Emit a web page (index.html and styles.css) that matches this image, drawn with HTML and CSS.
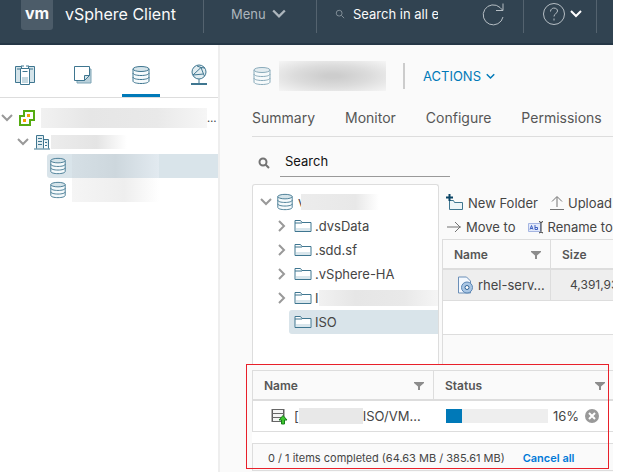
FILE: index.html
```html
<!DOCTYPE html>
<html lang="en">
<head>
  <meta charset="UTF-8" />
  <meta name="viewport" content="width=device-width, initial-scale=1.0"/>
  <title>vSphere Client</title>
  <link rel="stylesheet" href="styles.css">
</head>
<body>
  <!-- shared icons -->
  <svg class="defs" width="0" height="0" aria-hidden="true">
    <symbol id="db" viewBox="0 0 20 20">
      <path d="M2 4v12c0 1.500 3.500 2.500 8 2.500s8-1 8-2.500V4" fill="#f5fafc"/>
      <ellipse cx="10" cy="4" rx="8" ry="2.500" fill="#d5e4ea"/>
      <path d="M2 8c0 1.500 3.500 2.500 8 2.500S18 9.500 18 8M2 12c0 1.500 3.500 2.500 8 2.500s8-1 8-2.500" fill="none"/>
    </symbol>
    <symbol id="down" viewBox="0 0 12 12"><path d="M1 3l5 5 5-5"/></symbol>
    <symbol id="right" viewBox="0 0 12 12"><path d="M3 1l5 5-5 5"/></symbol>
    <symbol id="folder" viewBox="0 0 18 14">
      <path d="M1 12.500V1.500h5.500l1.500 2h9v9z" fill="#fff"/><path d="M2 9h14v3H2z" fill="#d9e6ec" stroke="none"/><path d="M1 4h7"/>
    </symbol>
    <symbol id="filter" viewBox="0 0 10 10"><path d="M0 1h10v1L6 5.500V9H4V5.500L0 2z"/></symbol>
    <symbol id="search" viewBox="0 0 12 12"><circle cx="5" cy="5" r="3.500"/><path d="M7.700 7.700L11 11"/></symbol>
  </svg>

  <header class="header">
    <div class="logo">vm</div>
    <div class="title">vSphere Client</div>
    <button class="menu">Menu <svg class="line" width="14" height="14"><use href="#down"/></svg></button>
    <div class="global-search">
      <svg class="line" width="10" height="10"><use href="#search"/></svg>
      <input type="text" value="Search in all environments" aria-label="Search in all environments">
    </div>
    <button class="refresh" aria-label="Refresh">
      <svg class="line" width="24" height="24" viewBox="0 0 24 24"><path d="M22 15A10 10 0 1 1 19 5.500L21.500 8M22 1.500V8.500H15"/></svg>
    </button>
    <button class="help" aria-label="Help">
      <svg class="line" width="24" height="24" viewBox="0 0 24 24"><circle cx="12" cy="12" r="10.500"/><path d="M8.500 9.500c0-4.500 7-4.500 7-.500 0 2.500-3.500 2.500-3.500 5.500M12 16.500v2"/></svg>
      <svg class="line caret" width="12" height="12"><use href="#down"/></svg>
    </button>
  </header>

  <div class="page">
    <aside class="sidebar">
      <nav class="views">
        <a href="#" aria-label="Hosts"><svg width="22" height="22" viewBox="0 0 22 22">
          <path d="M1.500 2.500h6v16h-6zM14.500 2.500h6v16h-6z" fill="#d5e4ea"/><path d="M3 5h3M16 5h3"/><path d="M6.500 4.500h9v16h-9z" fill="#fff"/><path d="M8.500 7.500h5M7 2h3M12 2h3"/><path d="M8 13h6v6H8z" fill="#c5d8e0" stroke="none"/></svg></a>
        <a href="#" aria-label="VMs"><svg width="20" height="20" viewBox="0 0 20 20">
          <path d="M4 4h14v14H4z" fill="#b9d0da" stroke="#7ea5b6"/><path d="M1.500 1.500h15v9l-5 5h-10z" fill="#fff"/><path d="M16.500 10.500h-5v5z" fill="#d5e4ea"/></svg></a>
        <a href="#" class="active" aria-label="Storage"><svg width="20" height="20"><use href="#db"/></svg></a>
        <a href="#" aria-label="Networks"><svg width="20" height="22" viewBox="0 0 20 22">
          <circle cx="10" cy="8" r="7" fill="#e2edf1"/><path d="M4 11L12 3.500 14.500 10 4 11M12 3.500l4 .5M14.500 10l1 2M8 2l4 1.500M10 15v4" fill="none"/><path d="M2 20h16" stroke-width="2"/></svg></a>
      </nav>
      <ul class="tree inventory">
        <li><svg class="arrow" width="12" height="12"><use href="#down"/></svg>
          <svg width="18" height="18" viewBox="0 0 18 18"><path d="M6 2h10v9h-4v5H2V7h4z" fill="#fff" stroke="#55ac12" stroke-width="2"/><path d="M9 5h3v3H9zM5 10h3v3H5z" fill="#f5a000" stroke="none"/></svg>
          <span class="blur wide"></span><span class="more">…</span></li>
        <li class="l1"><svg class="arrow" width="12" height="12"><use href="#down"/></svg>
          <svg width="16" height="16" viewBox="0 0 16 16"><path d="M2.500 14.500V1.500h7v13M9.500 5.500h5v9" fill="#e2edf1"/><path d="M0 15h16M4 4.500h4M4 7.500h4M4 10.500h4M11 8.500h2M11 11.500h2"/></svg>
          <span class="blur short"></span></li>
        <li class="l2 selected"><svg width="18" height="18"><use href="#db"/></svg><span class="blur store cool"></span></li>
        <li class="l2"><svg width="18" height="18"><use href="#db"/></svg><span class="blur store"></span></li>
      </ul>
    </aside>

    <main class="content">
      <div class="object">
        <svg class="faded" width="20" height="20"><use href="#db"/></svg>
        <span class="blur name"></span>
        <button class="actions">ACTIONS <svg class="line" width="9" height="9"><use href="#down"/></svg></button>
      </div>
      <nav class="tabs">
        <a href="#">Summary</a>
        <a href="#">Monitor</a>
        <a href="#">Configure</a>
        <a href="#">Permissions</a>
      </nav>
      <div class="file-search">
        <svg class="line" width="12" height="12"><use href="#search"/></svg>
        <input type="text" value="Search" aria-label="Search">
      </div>

      <div class="browser">
        <ul class="tree folders">
          <li><svg class="arrow" width="12" height="12"><use href="#down"/></svg><svg width="18" height="18"><use href="#db"/></svg><span>v</span><span class="blur root"></span></li>
          <li class="l1"><svg class="arrow" width="12" height="12"><use href="#right"/></svg><svg width="18" height="14"><use href="#folder"/></svg>.dvsData</li>
          <li class="l1"><svg class="arrow" width="12" height="12"><use href="#right"/></svg><svg width="18" height="14"><use href="#folder"/></svg>.sdd.sf</li>
          <li class="l1"><svg class="arrow" width="12" height="12"><use href="#right"/></svg><svg width="18" height="14"><use href="#folder"/></svg>.vSphere-HA</li>
          <li class="l1"><svg class="arrow" width="12" height="12"><use href="#right"/></svg><svg width="18" height="14"><use href="#folder"/></svg>I<span class="blur long"></span></li>
          <li class="l2 selected"><svg width="18" height="14"><use href="#folder"/></svg>ISO</li>
        </ul>

        <section class="files">
          <div class="toolbar">
            <button><svg width="18" height="18" viewBox="0 0 18 18"><path d="M3.500 15.500V6.500h4l1 2h8v7z" fill="#edf5f8"/><path d="M3.500 0v7M0 3.500h7" stroke="#0b4566" stroke-width="2"/></svg>New Folder</button>
            <button><svg class="line" width="14" height="16" viewBox="0 0 14 16"><path d="M7 12V2M2 6.500l5-5 5 5M0 14.500h14"/></svg>Upload</button>
          </div>
          <div class="toolbar">
            <button><svg class="line" width="16" height="14" viewBox="0 0 16 14"><path d="M1 7h14M9 2l5 5-5 5"/></svg>Move to</button>
            <button><svg width="16" height="14" viewBox="1 0 16 14"><path d="M1.500 3.500h12v8h-12z" fill="#e3eafa" stroke="#a5b5e2"/><path d="M3 9.500l1.500-4 1.500 4M3.500 8.500h2M8 5v4.500h2.500v-2H8" fill="none" stroke="#3d5fc0"/><path d="M12 1.500l2 1 2-1M14 2.500v9M12 13l2-1 2 1" fill="none" stroke="#333"/></svg>Rename to</button>
          </div>
          <table class="grid">
            <thead><tr><th class="col-name"><div>Name <svg class="fill" width="10" height="10"><use href="#filter"/></svg></div></th><th>Size</th></tr></thead>
            <tbody>
              <tr><td><div class="file"><svg width="17" height="18" viewBox="0 0 17 18"><path d="M1.500 1h8l4 4v12h-12z" fill="#f3f8fe" stroke="#6b8fb8"/><circle cx="10" cy="11.500" r="5.500" fill="#a9c6e4" stroke="#5b86b4"/><circle cx="10" cy="11.500" r="2" fill="#fff" stroke="#2f6297"/></svg>rhel-serv…</div></td><td class="size">4,391,936</td></tr>
            </tbody>
          </table>
          <div class="grid-foot"></div>
        </section>
      </div>

      <section class="uploads">
        <table class="grid">
          <thead><tr><th class="col-name"><div>Name <svg class="fill" width="10" height="10"><use href="#filter"/></svg></div></th><th><div>Status <svg class="fill" width="10" height="10"><use href="#filter"/></svg></div></th></tr></thead>
          <tbody>
            <tr>
              <td><div class="file"><svg width="18" height="18" viewBox="0 0 18 18"><path d="M2.500 2.500h11v12h-11z" fill="#f4f4f4" stroke="#555"/><path d="M2 2.500h12M2 6.500h12M2 10.500h12M2 14.500h12M2 2v13M14 2v13" stroke="#666"/><path d="M11.500 17v-4H9l4-4.500 4 4.500h-2.500v4z" fill="#3fc42f" stroke="#16801a"/></svg><span>[</span><span class="blur path"></span><span>ISO/VM…</span></div></td>
              <td><div class="status">
                <div class="bar" role="progressbar" aria-label="Upload progress" aria-valuenow="16"><div style="width: 16%"></div></div>
                <span>16%</span>
                <button class="cancel" aria-label="Cancel upload"><svg width="14" height="14" viewBox="0 0 14 14"><circle cx="7" cy="7" r="7" fill="#999" stroke="none"/><path d="M4 4l6 6M10 4l-6 6" stroke="#fff" stroke-width="2"/></svg></button>
              </div></td>
            </tr>
          </tbody>
        </table>
        <div class="summary"><span>0 / 1 items completed (64.63 MB / 385.61 MB)</span><a href="#">Cancel all</a></div>
      </section>
    </main>
  </div>
</body>
</html>
```
FILE: styles.css
```css
* {
  box-sizing: border-box;
}
body {
  margin: 0;
  padding-right: 5px;
  min-height: 100vh;
  display: flex;
  flex-direction: column;
  overflow: hidden;
  font-family: Inter, "Open Sans", sans-serif;
  font-size: 13px;
  line-height: 24px;
  color: #454545;
  background: #fff;
}
.defs { position: absolute; }
svg {
  flex: none;
  display: block;
  stroke: #3f7690;
  stroke-width: 1;
}
.line { fill: none; stroke: currentColor; }
.fill { fill: #8c8c8c; stroke: none; }
.arrow { fill: none; stroke: #999; stroke-width: 2; }
button, input {
  font: inherit;
  color: inherit;
  background: none;
  border: none;
  padding: 0;
  margin: 0;
}
button {
  display: flex;
  align-items: center;
  white-space: nowrap;
}
a { color: inherit; text-decoration: none; }
ul { list-style: none; margin: 0; padding: 0; }

/* header */
.header {
  display: flex;
  height: 45px;
  padding: 0 16px 10px 21px;
  background: #314351;
  border-bottom: 2px solid #253746;
  color: #fafafa;
}
.logo {
  width: 32px;
  height: 30px;
  line-height: 26px;
  border-radius: 0 0 3px 3px;
  background: #4c5c69;
  text-align: center;
  font-size: 16px;
  font-weight: 700;
}
.title {
  width: 151px;
  padding-left: 12px;
  line-height: 28px;
  font-size: 16px;
  white-space: nowrap;
  border-right: 1px solid #54636f;
}
.menu {
  width: 113px;
  padding: 0 0 5px 27px;
  gap: 6px;
  color: #adb6bd;
  border-right: 1px solid #54636f;
}
.global-search {
  display: flex;
  align-items: center;
  flex: 1;
  min-width: 0;
  gap: 8px;
  padding: 0 0 5px 18px;
}
.global-search svg { color: #8f9ba4; }
.global-search input { width: 85px; }
.refresh {
  padding: 0 18px 5px 0;
  color: #b6bec4;
  border-right: 1px solid #54636f;
}
.help {
  padding: 0 14px 5px 18px;
  gap: 4px;
  color: #b6bec4;
  border-right: 1px solid #54636f;
}
.caret { color: #fff; }
.menu svg, .caret { stroke-width: 2; }

.page {
  display: flex;
  flex: 1;
}

/* left navigator */
.sidebar {
  width: 220px;
  flex: none;
  border-right: 2px solid #eee;
}
.views {
  display: flex;
  height: 53px;
  justify-content: space-between;
  padding-left: 6px;
  border-bottom: 1px solid #ddd;
}
.views a {
  width: 38px;
  display: flex;
  align-items: center;
  justify-content: center;
  padding-top: 11px;
  border-bottom: 3px solid transparent;
}
.views .active { border-color: #0079b8; }
.tree li {
  display: flex;
  align-items: center;
  height: 24px;
  white-space: nowrap;
  overflow: hidden;
}
.tree .selected {
  background: #d9e4ea;
  border-radius: 3px 0 0 3px;
}
.inventory { padding-top: 8px; }
.inventory li { gap: 5px; padding-left: 1px; }
.inventory .l1 { padding-left: 17px; }
.inventory .l2 { margin-left: 47px; padding-left: 2px; }
.more { font-size: 11px; margin-left: -5px; }

/* blurred out names */
.blur {
  flex: none;
  height: 16px;
  background: linear-gradient(90deg, #f1f1f1, #e6e6e6 30%, #e9e9e9 70%, #f6f6f6);
}
.blur.wide { width: 166px; height: 20px; }
.blur.short { width: 76px; height: 14px; margin-left: -4px; background: linear-gradient(90deg, #ececec, #e4e4e4 60%, #fff); }
.blur.store { width: 87px; height: 24px; background: linear-gradient(90deg, #f5f5f5, #eee 60%, #fff); }
.blur.cool { background: linear-gradient(90deg, #d5dfe5, #cdd7dd 50%, #e2eaf0); }
.blur.name {
  width: 107px;
  height: 30px;
  margin: 0 17px 0 7px;
  background: radial-gradient(#cdcdcd 10%, #dcdcdc 50%, #f5f5f5);
}

/* main */
.content {
  flex: 1;
  min-width: 0;
  padding-left: 32px;
  background: #fafafa;
}
.object {
  display: flex;
  align-items: center;
  height: 58px;
  padding-top: 4px;
}
.faded { opacity: 0.6; }
.actions {
  height: 26px;
  padding-left: 18px;
  gap: 5px;
  color: #0079b8;
  border-left: 2px solid #ccc;
}
.actions svg, .file-search svg { stroke-width: 2; }
.tabs {
  display: flex;
  gap: 30px;
  height: 34px;
  line-height: 30px;
  font-size: 14px;
  color: #565656;
  border-bottom: 1px solid #ddd;
}
.file-search {
  display: flex;
  align-items: center;
  gap: 10px;
  height: 47px;
  padding: 5px 0 0 6px;
}
.file-search svg { color: #737373; }
.file-search input {
  width: 170px;
  height: 31px;
  margin-bottom: 4px;
  padding: 0 5px;
  color: #111;
  border-bottom: 1px solid #999;
}
.browser {
  display: flex;
  gap: 3px;
  height: 180px;
  margin-bottom: 6px;
}
.folders {
  width: 187px;
  flex: none;
  padding-top: 5px;
  background: #fff;
  border: 1px solid #ddd;
  border-bottom: none;
  border-radius: 3px 3px 0 0;
}
.folders li { gap: 4px; padding-left: 7px; }
.folders .l1 { padding-left: 23px; gap: 3px; }
.folders .l1 .arrow { margin-right: 3px; }
.folders .l2 { margin-left: 36px; padding-left: 5px; gap: 3px; }
.blur.root { width: 78px; margin-left: -8px; background: linear-gradient(90deg, #ececec, #e8e8e8 70%, #fff); }
.blur.long { width: 122px; margin-left: -3px; }
.blur.path { width: 64px; background: #e8e8e8; }

.files {
  flex: 1;
  min-width: 0;
  display: flex;
  flex-direction: column;
  overflow: hidden;
}
.toolbar {
  display: flex;
  height: 23px;
  padding-left: 4px;
  gap: 12px;
}
.toolbar:first-child { height: 31px; padding-top: 6px; }
.toolbar + .toolbar { margin-bottom: 1px; }
.toolbar button { gap: 4px; }
.toolbar .line { color: #737373; }
.grid {
  width: 100%;
  table-layout: fixed;
  border-collapse: separate;
  border-spacing: 0;
  border: 1px solid #ddd;
  border-right: none;
  border-bottom: none;
  background: #fff;
}
.grid th {
  height: 30px;
  padding: 2px 9px 0 11px;
  text-align: left;
  font-size: 12px;
  font-weight: 600;
  color: #565656;
  background: #fafafa;
  border-bottom: 2px solid #ddd;
}
.grid th div {
  display: flex;
  align-items: center;
  justify-content: space-between;
}
.grid th + th { border-left: 1px solid #ddd; }
.grid td {
  height: 31px;
  padding: 0;
  border-bottom: 1px solid #ddd;
  overflow: hidden;
  white-space: nowrap;
}
.file { display: flex; align-items: center; gap: 4px; }
.files .col-name { width: 107px; }
.files td { background: #eee; }
.files td + td { border-left: 1px solid #ddd; }
.files .file { padding-left: 14px; }
.files .size { padding-left: 19px; font-size: 12px; }
.files .grid { flex: none; }
.grid-foot {
  flex: 1;
  border-left: 1px solid #ddd;
  background: linear-gradient(#fff 33px, #ddd 33px, #ddd 34px, #fafafa 34px);
}

/* upload progress */
.uploads {
  position: relative;
  background: #fff;
}
.uploads::after {
  content: "";
  position: absolute;
  top: -6px;
  left: -6px;
  right: 4px;
  bottom: 2px;
  border: 1px solid #e8202a;
  pointer-events: none;
}
.uploads .col-name { width: 180px; }
.uploads th + th { padding-right: 8px; }
.uploads .file { padding-left: 17px; gap: 0; }
.uploads .file svg { margin-right: 6px; }
.status {
  display: flex;
  align-items: center;
  padding-left: 13px;
  gap: 5px;
}
.bar {
  width: 102px;
  height: 14px;
  background: #eee;
}
.bar div { height: 100%; background: #0079b8; }
.status .cancel { margin-left: 1px; }
.summary {
  display: flex;
  gap: 18px;
  height: 28px;
  margin-top: 11px;
  padding-left: 15px;
  line-height: 28px;
  font-size: 11px;
  white-space: nowrap;
  border: 1px solid #ddd;
  border-right: none;
  background: #fafafa;
}
.summary a { color: #0079d8; font-weight: 600; }
```
